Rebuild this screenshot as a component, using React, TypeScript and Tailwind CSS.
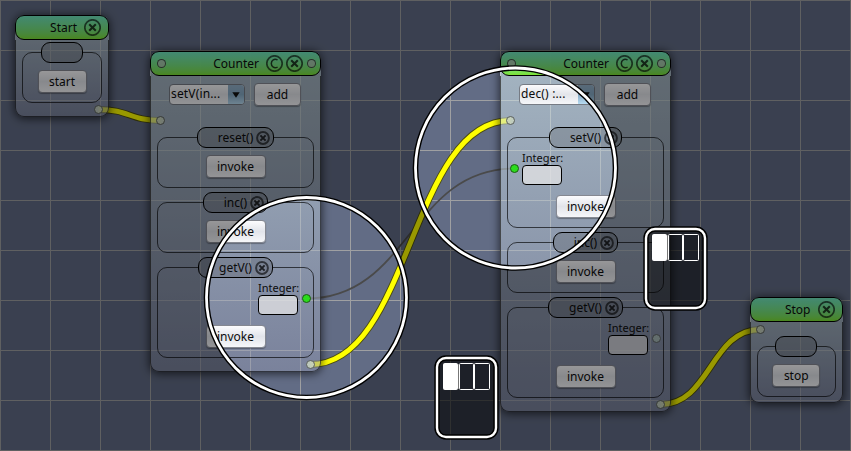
import type { ReactNode } from "react";

function CloseIcon() {
  return (
    <svg width="17" height="17" viewBox="0 0 17 17" fill="none" stroke="#000" className="shrink-0">
      <circle cx="8.5" cy="8.5" r="7.7" strokeWidth="1.7" opacity="0.62" />
      <path d="M5.2 5.2l6.6 6.600M11.800 5.200l-6.600 6.600" strokeWidth="2.100" opacity="0.72" />
    </svg>
  );
}

function SmallCloseIcon() {
  return (
    <svg width="14" height="14" viewBox="0 0 14 14" fill="none" stroke="#000" className="shrink-0">
      <circle cx="7" cy="7" r="5.9" strokeWidth="2" opacity="0.6" />
      <path d="M4.400 4.400l5.200 5.200M9.600 4.400l-5.200 5.200" strokeWidth="2" opacity="0.75" />
    </svg>
  );
}

function CopyIcon() {
  return (
    <svg width="17" height="17" viewBox="0 0 17 17" fill="none" stroke="#000" className="shrink-0">
      <circle cx="8.5" cy="8.5" r="7.700" strokeWidth="1.700" opacity="0.62" />
      <path d="M11.600 4.900C8.300 3.300 5.300 5 5.300 8.500s3 5.200 6.300 3.600" strokeWidth="1.500" opacity="0.72" />
    </svg>
  );
}

function Port({ kind = "flow" }: { kind?: "flow" | "active" | "idle" | "header" }) {
  const look = {
    flow: "border-[#595e5c] bg-[#c5d0bf]/90",
    active: "border-[#1c5c14] bg-[#2bdc1c]",
    idle: "border-[#5c6064] bg-[#a9bdb8]/90",
    header: "border-[#28302c]/80 bg-[#b4bdb6]/75",
  }[kind];
  return <span className={`block size-[9px] shrink-0 rounded-full border ${look}`} />;
}

function Btn({ children, className = "" }: { children: ReactNode; className?: string }) {
  return (
    <button
      className={`mx-auto block h-[23px] rounded-[4px] border border-[#858891] bg-linear-to-b from-[#fcfcfe] via-[#e2e4ea] to-[#f6f7fa] text-center leading-[20px] shadow-[0_1px_1px_rgba(0,0,0,0.3)] ${className}`}
    >
      {children}
    </button>
  );
}

function Node({
  title,
  counter,
  className,
  children,
}: {
  title: string;
  counter?: boolean;
  className: string;
  children: ReactNode;
}) {
  return (
    <section
      className={`absolute rounded-[9px] bg-linear-to-b from-[#dcf2f4]/55 to-[#9298b2]/50 shadow-[0_1px_9px_1px_rgba(0,0,0,0.6)] ${className}`}
    >
      <header
        className={`flex h-[25px] items-center justify-between rounded-[9px] border border-black bg-linear-to-b from-[#6de6bd]/95 to-[#7ae32c]/95 ${
          counter ? "pl-[6px] pr-[4px]" : "px-[7px]"
        }`}
      >
        {counter && <Port kind="header" />}
        <div className="ml-auto flex items-center">
          <h2 className="mr-[7px]">{title}</h2>
          {counter && (
            <span className="mr-[3px]">
              <CopyIcon />
            </span>
          )}
          <CloseIcon />
          {counter && (
            <span className="ml-[4px]">
              <Port kind="header" />
            </span>
          )}
        </div>
      </header>
      <div className="rounded-b-[9px] border-x border-b border-black/60 px-[6px]">{children}</div>
    </section>
  );
}

function Method({ name, className = "", children }: { name?: string; className?: string; children: ReactNode }) {
  return (
    <fieldset className={`rounded-[10px] border border-black/65 ${className}`}>
      <legend
        className={`mx-auto flex h-[21px] items-center rounded-[9px] border border-black bg-[#404040]/20 ${
          name ? "gap-[3px] pl-[20px] pr-[3px]" : "w-[42px]"
        }`}
      >
        {name && (
          <>
            <span className="leading-[18px]">{name}</span>
            <SmallCloseIcon />
          </>
        )}
      </legend>
      {children}
    </fieldset>
  );
}

function Field() {
  return (
    <label className="block w-[40px] whitespace-nowrap">
      <span className="block h-[14px] text-[11px] leading-[13px]">Integer:</span>
      <span className="block h-[20px] rounded-[4px] border border-black bg-[#e4e4e6]/75" />
    </label>
  );
}

function Picker({ value }: { value: string }) {
  return (
    <div className="flex h-[21px] w-[76px] overflow-hidden rounded-[4px] border border-[#767b84] bg-linear-to-b from-[#fbfbfd] via-[#e3e5ea] to-[#f5f6f9]">
      <span className="flex-1 whitespace-nowrap pl-px leading-[18px] tracking-[0.15px]">{value}</span>
      <span className="flex w-[16px] items-center justify-center bg-linear-to-b from-[#94b1c9] via-[#84a8c4] to-[#b8dcf2]">
        <svg width="8" height="6" viewBox="0 0 8 6">
          <path d="M0.3 0.3h7.4L4 5.700z" fill="#111" />
        </svg>
      </span>
    </div>
  );
}

function Toolbar({ value }: { value: string }) {
  return (
    <>
      <div className="flex items-center pl-[12px] pr-[13px] pt-[7px]">
        <Picker value={value} />
        <Btn className="mr-0! w-[47px]">add</Btn>
      </div>
      <div className="mt-[10px] -ml-px">
        <Port />
      </div>
    </>
  );
}

function Wire({ d }: { d: string }) {
  return (
    <g fill="none">
      <path d={d} stroke="#4c4c10" strokeWidth="6.8" />
      <path d={d} stroke="#ffff00" strokeWidth="5" />
    </g>
  );
}

function MouseHint({ x, y }: { x: number; y: number }) {
  return (
    <g transform={`translate(${x} ${y})`}>
      <rect x="2.5" y="2.5" width="59" height="79" rx="9" fill="#000" fillOpacity="0.5" stroke="#000" strokeWidth="5.4" />
      <rect x="2.5" y="2.5" width="59" height="79" rx="9" fill="none" stroke="#fff" strokeWidth="2.4" />
      <rect x="9" y="8" width="14" height="26" rx="1" fill="#fff" stroke="#fff" />
      <path d="M24 8.500v25" stroke="#777" />
      <rect x="25" y="8" width="14" height="26" rx="1" fill="none" stroke="#fff" />
      <rect x="40" y="8" width="15" height="26" rx="1" fill="none" stroke="#fff" />
    </g>
  );
}

function Lens({ cx, cy }: { cx: number; cy: number }) {
  return (
    <g fill="none">
      <circle cx={cx} cy={cy} r="100" stroke="#000" strokeWidth="5.6" />
      <circle cx={cx} cy={cy} r="100" stroke="#fff" strokeWidth="2.8" />
    </g>
  );
}

export default function App() {
  return (
    <main className="relative h-[451px] w-[851px] overflow-hidden bg-[#626c85] bg-[linear-gradient(to_right,#9fa0a2_1px,transparent_1px),linear-gradient(to_bottom,#9fa0a2_1px,transparent_1px)] bg-size-[50px_50px] font-['Noto_Sans',sans-serif] text-[12px] text-[#0c0c0c]">
      <svg className="absolute inset-0" width="851" height="451">
        <path d="M306.5 298.5C410 298.5 410 168.5 514.5 168.5" fill="none" stroke="#4a4a4a" strokeWidth="1.8" />
        <Wire d="M98.5 109.5C129.5 109.5 129.5 120.5 160.5 120.5" />
        <Wire d="M310.5 364.5C410.5 364.5 410.5 120.5 510.5 120.5" />
        <Wire d="M660.5 404.5C710.5 404.5 710.5 329.5 760.5 329.5" />
      </svg>

      <Node title="Start" className="left-[15px] top-[15px] w-[94px]">
        <div className="pt-[2px] pb-[2px]">
          <Method className="h-[61px]">
            <Btn className="mt-[7px] w-[49px]">start</Btn>
          </Method>
          <div className="mt-[2px] -mr-px flex justify-end">
            <Port />
          </div>
        </div>
      </Node>

      <Node title="Counter" counter className="left-[150px] top-[51px] w-[171px]">
        <Toolbar value="setV(in..." />
        <div className="flex flex-col gap-[4px] pt-[2px]">
          <Method name="reset()" className="h-[61px]">
            <Btn className="mt-[7px] w-[60px]">invoke</Btn>
          </Method>
          <Method name="inc()" className="h-[61px]">
            <Btn className="mt-[7px] w-[60px]">invoke</Btn>
          </Method>
          <Method name="getV()" className="h-[101px]">
            <div className="flex justify-end gap-[4px] pt-[3px] pr-[2px]">
              <Field />
              <div className="pt-[13px]">
                <Port kind="active" />
              </div>
            </div>
            <Btn className="mt-[10px] w-[60px]">invoke</Btn>
          </Method>
        </div>
        <div className="-mr-px flex justify-end pt-[2px] pb-[2px]">
          <Port />
        </div>
      </Node>

      <Node title="Counter" counter className="left-[500px] top-[51px] w-[171px]">
        <Toolbar value="dec() :..." />
        <div className="flex flex-col gap-[4px] pt-[2px]">
          <Method name="setV()" className="h-[101px]">
            <div className="flex gap-[3px] pt-[3px] pl-[2px]">
              <div className="pt-[13px]">
                <Port kind="active" />
              </div>
              <Field />
            </div>
            <Btn className="mt-[10px] w-[60px]">invoke</Btn>
          </Method>
          <Method name="inc()" className="h-[61px]">
            <Btn className="mt-[7px] w-[60px]">invoke</Btn>
          </Method>
          <Method name="getV()" className="h-[101px]">
            <div className="flex justify-end gap-[4px] pt-[3px] pr-[2px]">
              <Field />
              <div className="pt-[13px]">
                <Port kind="idle" />
              </div>
            </div>
            <Btn className="mt-[10px] w-[60px]">invoke</Btn>
          </Method>
        </div>
        <div className="-mr-px flex justify-end pt-[2px] pb-[2px]">
          <Port />
        </div>
      </Node>

      <Node title="Stop" className="left-[750px] top-[297px] w-[92.5px]">
        <div className="pt-[3px] pb-[5px]">
          <div className="-ml-px">
            <Port />
          </div>
          <Method className="mt-[2px] h-[61px]">
            <Btn className="mt-[7px] w-[48px]">stop</Btn>
          </Method>
        </div>
      </Node>

      <svg className="absolute inset-0" width="851" height="451">
        <path
          fillRule="evenodd"
          fill="#000"
          fillOpacity="0.4"
          d="M0 0H851V451H0ZM206.5 297.5a100 100 0 1 0 200 0a100 100 0 1 0 -200 0ZM415.5 168a100 100 0 1 0 200 0a100 100 0 1 0 -200 0Z"
        />
        <Lens cx={306.5} cy={297.5} />
        <Lens cx={515.5} cy={168} />
        <MouseHint x={434.5} y={355.5} />
        <MouseHint x={643.5} y={226.5} />
      </svg>
    </main>
  );
}
